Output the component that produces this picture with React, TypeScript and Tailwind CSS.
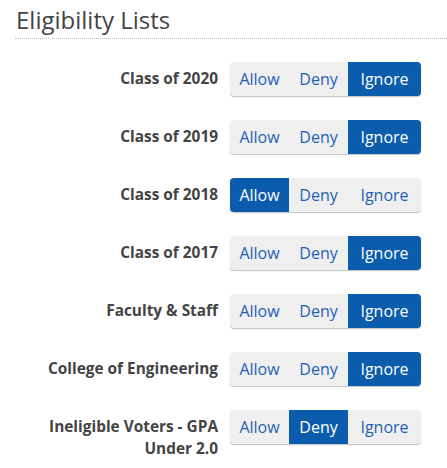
import React from "react";

const rows: { label: string; value: "Allow" | "Deny" | "Ignore" }[] = [
  { label: "Class of 2020", value: "Ignore" },
  { label: "Class of 2019", value: "Ignore" },
  { label: "Class of 2018", value: "Allow" },
  { label: "Class of 2017", value: "Ignore" },
  { label: "Faculty & Staff", value: "Ignore" },
  { label: "College of Engineering", value: "Ignore" },
  { label: "Ineligible Voters - GPA Under 2.0", value: "Deny" },
];

const opts = ["Allow", "Deny", "Ignore"] as const;

export default function App() {
  return (
    <div className="w-[447px] h-[468px] bg-white overflow-hidden" style={{ fontFamily: '"Open Sans", sans-serif' }}>
      <div className="pl-[15px] pt-[3px]">
        <h2 className="text-[24px] leading-[34px] text-[#444] font-normal pl-[1px]">Eligibility Lists</h2>
        <div className="border-b border-dotted border-[#bbb] mt-[1px]" />
      </div>
      <div className="flex flex-col gap-[24px] mt-[23px]">
        {rows.map((r) => (
          <div key={r.label} className="flex items-start">
            <div className="w-[218px] text-right font-bold text-[15.4px] leading-[22px] text-[#444] pt-[6px] pl-[40px]">
              {r.label}
            </div>
            <div className="ml-[12px] flex rounded-[4px] overflow-hidden bg-[#efefef] shadow-[0_1px_1px_rgba(0,0,0,0.25)]">
              {opts.map((o) => (
                <div
                  key={o}
                  className={
                    "h-[34px] flex items-center justify-center text-[16px] " +
                    (o === "Ignore" ? "w-[73px] " : "w-[59px] ") +
                    (r.value === o ? "bg-[#0b5cad] text-white" : "text-[#1e62b6]")
                  }
                >
                  {o}
                </div>
              ))}
            </div>
          </div>
        ))}
      </div>
    </div>
  );
}
